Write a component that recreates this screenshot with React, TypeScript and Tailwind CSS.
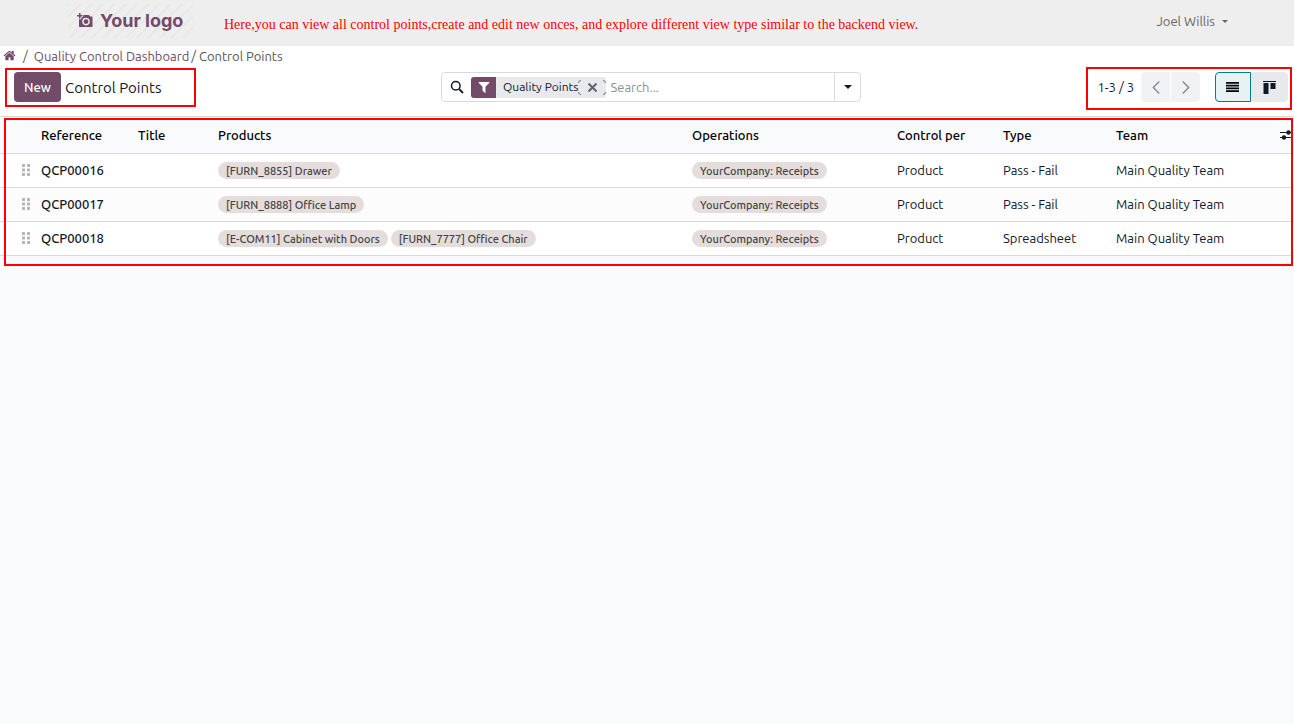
import { useState } from "react";

type ControlPoint = {
  reference: string;
  title: string;
  products: string[];
  operations: string[];
  controlPer: string;
  type: string;
  team: string;
};

const CONTROL_POINTS: ControlPoint[] = [
  {
    reference: "QCP00016",
    title: "",
    products: ["[FURN_8855] Drawer"],
    operations: ["YourCompany: Receipts"],
    controlPer: "Product",
    type: "Pass - Fail",
    team: "Main Quality Team",
  },
  {
    reference: "QCP00017",
    title: "",
    products: ["[FURN_8888] Office Lamp"],
    operations: ["YourCompany: Receipts"],
    controlPer: "Product",
    type: "Pass - Fail",
    team: "Main Quality Team",
  },
  {
    reference: "QCP00018",
    title: "",
    products: ["[E-COM11] Cabinet with Doors", "[FURN_7777] Office Chair"],
    operations: ["YourCompany: Receipts"],
    controlPer: "Product",
    type: "Spreadsheet",
    team: "Main Quality Team",
  },
];

const Logo = () => (
  <a href="#" className="relative flex h-[34px] w-[125px] shrink-0 items-center gap-[7px] pl-[9px] text-[#714b67]">
    <svg className="absolute inset-0 h-full w-full" aria-hidden="true">
      <defs>
        <pattern id="stripes" width="8" height="8" patternUnits="userSpaceOnUse" patternTransform="rotate(45)">
          <rect width="1.500" height="8" fill="#e6e6e6" />
        </pattern>
      </defs>
      <rect width="100%" height="100%" fill="url(#stripes)" />
    </svg>
    <svg className="relative h-4 w-4 shrink-0" viewBox="0 0 16 16" fill="currentColor" aria-hidden="true">
      <path d="M2 0h1.500v2H5.500v1.400H3.500v2H2v-2H0V2h2z" />
      <path
        fillRule="evenodd"
        d="M6.500 2h5.500l1 1.500h1.500c.6 0 1 .4 1 1V13c0 .6-.4 1-1 1H3c-.6 0-1-.4-1-1V6.300h2.400V4.300h1.600zM9 4.800a3.800 3.800 0 1 0 0 7.600 3.800 3.800 0 0 0 0-7.600zm0 1.400a2.400 2.400 0 1 1 0 4.800 2.400 2.400 0 0 1 0-4.800z"
      />
    </svg>
    <span className="relative whitespace-nowrap font-[Inter] text-lg font-bold">Your logo</span>
  </a>
);

const HomeIcon = () => (
  <svg className="h-[13px] w-[13px]" viewBox="0 0 1792 1792" fill="currentColor" aria-hidden="true">
    <path d="M1472 992v480q0 26-19 45t-45 19h-384v-384h-256v384h-384q-26 0-45-19t-19-45v-480q0-1 .5-3t.5-3l575-474 575 474q1 2 1 6zm223-69l-62 74q-8 9-21 11h-3q-13 0-21-7l-692-577-692 577q-12 8-24 7-13-2-21-11l-62-74q-8-10-7-23.500t11-21.500l719-599q32-26 76-26t76 26l244 204v-195q0-14 9-23t23-9h192q14 0 23 9t9 23v408l219 182q10 8 11 21.500t-7 23.500z" />
  </svg>
);

const FilterIcon = () => (
  <svg className="h-[14px] w-[14px]" viewBox="0 0 1792 1792" fill="currentColor" aria-hidden="true">
    <path d="M1595 295q17 41-14 70l-493 493v742q0 42-39 59-13 5-25 5-27 0-45-19l-256-256q-19-19-19-45v-486l-493-493q-31-29-14-70 17-39 59-39h1280q42 0 59 39z" />
  </svg>
);

const Caret = ({ className }: { className: string }) => (
  <svg className={className} viewBox="0 0 8 4" fill="currentColor" aria-hidden="true">
    <path d="M0 0h8L4 4z" />
  </svg>
);

const DragHandle = () => (
  <svg className="ml-[22px] h-3 w-2" viewBox="0 0 8 12" fill="#b3b8bf" aria-hidden="true">
    {[0, 4.5, 9].map((y) => (
      <g key={y}>
        <rect x="0" y={y} width="3" height="3" />
        <rect x="5" y={y} width="3" height="3" />
      </g>
    ))}
  </svg>
);

const Tag = ({ label }: { label: string }) => (
  <span className="flex h-[17px] items-center whitespace-nowrap rounded-full bg-[#e5dddc] px-2 text-[11px] font-medium text-[#444]">
    {label}
  </span>
);

const Highlight = ({ className }: { className: string }) => (
  <div className={`pointer-events-none absolute border-2 border-[#ff0000] ${className}`} />
);

const Header = () => (
  <header className="flex h-[46px] items-center bg-[#eee] pb-1 pl-[68px] pr-[66px]">
    <Logo />
    <p className="ml-[31px] whitespace-nowrap pt-2 font-['Liberation_Serif',serif] text-sm text-[#ff0000]">
      Here,you can view all control points,create and edit new onces, and explore different view type similar to the
      backend view.
    </p>
    <button type="button" className="ml-auto flex items-center gap-[7px] whitespace-nowrap text-[#666]">
      Joel Willis
      <Caret className="h-[3px] w-[6px]" />
    </button>
  </header>
);

const Breadcrumb = () => (
  <nav aria-label="Breadcrumb" className="flex h-5 items-center pb-px pl-[3px] text-[#555]">
    <a href="#" aria-label="Home" className="text-[#714b67]">
      <HomeIcon />
    </a>
    <span className="ml-[7px]">/</span>
    <a href="#" className="ml-[6px] text-[#714b67]">
      Quality Control Dashboard
    </a>
    <span className="ml-[2px]">/ Control Points</span>
  </nav>
);

const SearchBar = () => {
  const [filtered, setFiltered] = useState(true);

  return (
    <div className="flex h-[30px] rounded border border-[#d8dadd] bg-white">
      <div className="flex min-w-0 flex-1 items-center">
        <svg className="ml-2 h-[14px] w-[14px] shrink-0" viewBox="0 0 14 14" fill="none" stroke="#111827" aria-hidden="true">
          <circle cx="5.800" cy="5.800" r="4.300" strokeWidth="1.500" />
          <path d="M9 9l4 4" strokeWidth="1.800" />
        </svg>
        {filtered && (
          <div className="ml-[7px] flex h-[21px] items-center overflow-hidden rounded-[3px] bg-[#e7e9ed]">
            <span className="flex h-full w-[25px] items-center justify-center bg-[#714b67] text-white">
              <FilterIcon />
            </span>
            <span className="whitespace-nowrap pl-[7px] text-xs">Quality Points</span>
            <button
              type="button"
              aria-label="Remove filter"
              onClick={() => setFiltered(false)}
              className="relative flex h-full w-7 items-center justify-center"
            >
              <svg className="absolute inset-0 h-full w-full" viewBox="0 0 28 21" fill="none" stroke="#777" aria-hidden="true">
                <path d="M3 3.500Q.500 3.500 .500 6M.500 15Q.500 17.500 3 17.500M25 3.500Q27.500 3.500 27.500 6M27.500 15Q27.500 17.500 25 17.500" />
              </svg>
              <svg className="h-[9px] w-[9px]" viewBox="0 0 9 9" stroke="#5b626c" strokeWidth="2" aria-hidden="true">
                <path d="M.500.500l8 8M8.500.500l-8 8" />
              </svg>
            </button>
          </div>
        )}
        <input
          type="text"
          aria-label="Search"
          placeholder="Search..."
          className="ml-1 min-w-0 flex-1 bg-transparent outline-none placeholder:text-[#8b8f96]"
        />
      </div>
      <button
        type="button"
        aria-label="Search options"
        className="flex w-[26px] items-center justify-center border-l border-[#d8dadd]"
      >
        <Caret className="h-1 w-2" />
      </button>
    </div>
  );
};

const Pager = () => (
  <div className="flex items-center">
    <span className="mr-[7px] whitespace-nowrap">1-3 / 3</span>
    <div className="flex gap-px text-[#858991]">
      <button
        type="button"
        aria-label="Previous"
        className="flex h-[30px] w-[29px] items-center justify-center rounded-l bg-[#f1f2f4]"
      >
        <svg className="h-[13px] w-2" viewBox="0 0 7 12" fill="none" stroke="currentColor" strokeWidth="1.300">
          <path d="M6.500.5L1 6l5.500 5.500" />
        </svg>
      </button>
      <button
        type="button"
        aria-label="Next"
        className="flex h-[30px] w-[29px] items-center justify-center rounded-r bg-[#f1f2f4]"
      >
        <svg className="h-[13px] w-2" viewBox="0 0 7 12" fill="none" stroke="currentColor" strokeWidth="1.300">
          <path d="M.5.5L6 6 .5 11.500" />
        </svg>
      </button>
    </div>
  </div>
);

const ViewSwitcher = () => (
  <div className="flex">
    <button
      type="button"
      aria-label="List view"
      className="flex h-[30px] w-9 items-center justify-center rounded-l border border-[#017e84] bg-[#e6f2f3]"
    >
      <svg className="h-[10px] w-[14px]" viewBox="0 0 14 10" fill="#000" aria-hidden="true">
        <path d="M0 0h13v1.700H0zM0 2.700h13v1.700H0zM0 5.500h13v1.700H0zM0 8.300h13V10H0z" />
      </svg>
    </button>
    <button
      type="button"
      aria-label="Kanban view"
      className="flex h-[30px] w-[37px] items-center justify-center rounded-r bg-[#e7e9ed]"
    >
      <svg className="h-[13px] w-[13px]" viewBox="0 0 13 13" fill="#111827" aria-hidden="true">
        <path d="M0 0h13v1H0zM.500 2h5v11h-5zM7.500 2h5v6h-5z" />
      </svg>
    </button>
  </div>
);

const ControlPanel = () => (
  <div className="grid grid-cols-[1fr_420px_1fr] items-center border-b border-[#d8dadd] pb-[14px] pl-[14px] pr-[6px] pt-[6px]">
    <div className="relative flex items-center gap-1 justify-self-start">
      <button type="button" className="h-[30px] w-[47px] rounded bg-[#714b67] font-medium text-white">
        New
      </button>
      <h1 className="whitespace-nowrap pt-px text-[15px]">Control Points</h1>
      <Highlight className="-left-[9px] -right-[35px] -top-1 -bottom-[5px]" />
    </div>
    <SearchBar />
    <div className="relative flex items-center gap-[15px] justify-self-end">
      <Pager />
      <ViewSwitcher />
      <Highlight className="-left-3 -right-1 -top-[5px] -bottom-2" />
    </div>
  </div>
);

const ControlPointTable = () => (
  <div className="relative">
    <table className="w-full table-fixed border-collapse text-left">
      <colgroup>
        <col className="w-9" />
        <col className="w-[97px]" />
        <col className="w-[80px]" />
        <col />
        <col className="w-[205px]" />
        <col className="w-[106px]" />
        <col className="w-[113px]" />
        <col className="w-[164px]" />
        <col className="w-[19px]" />
      </colgroup>
      <thead>
        <tr className="h-9 border-b border-[#d8dadd] text-black *:px-[5px] *:font-medium">
          <th aria-label="Sort" />
          <th>Reference</th>
          <th>Title</th>
          <th>Products</th>
          <th>Operations</th>
          <th>Control per</th>
          <th>Type</th>
          <th>Team</th>
          <th>
            <button type="button" aria-label="Optional columns" className="flex">
              <svg className="h-[10px] w-3" viewBox="0 0 12 10" fill="#111827" aria-hidden="true">
                <path d="M0 2h12v1H0zM0 7h12v1H0z" />
                <circle cx="8.500" cy="2.500" r="2.200" />
                <circle cx="4" cy="7.500" r="2.200" />
              </svg>
            </button>
          </th>
        </tr>
      </thead>
      <tbody>
        {CONTROL_POINTS.map((point) => (
          <tr key={point.reference} className="h-[34px] border-b border-[#d8dadd] bg-white even:bg-[#fcfcfc] *:px-[5px]">
            <td className="!px-0">
              <DragHandle />
            </td>
            <td className="font-medium">{point.reference}</td>
            <td>{point.title}</td>
            <td>
              <div className="flex gap-[3px] pt-px">
                {point.products.map((product) => (
                  <Tag key={product} label={product} />
                ))}
              </div>
            </td>
            <td>
              <div className="flex gap-[3px] pt-px">
                {point.operations.map((operation) => (
                  <Tag key={operation} label={operation} />
                ))}
              </div>
            </td>
            <td>{point.controlPer}</td>
            <td>{point.type}</td>
            <td>{point.team}</td>
            <td />
          </tr>
        ))}
      </tbody>
    </table>
    <Highlight className="left-1 right-px top-px -bottom-[10px]" />
  </div>
);

const App = () => {
  return (
    <div className="flex min-h-screen flex-col bg-white pb-1 font-[Ubuntu,'Noto_Sans',sans-serif] text-[13px] leading-5 text-[#111827]">
      <Header />
      <Breadcrumb />
      <ControlPanel />
      <main className="flex-1 bg-[#f9fafc]">
        <ControlPointTable />
      </main>
    </div>
  );
};

export default App;
